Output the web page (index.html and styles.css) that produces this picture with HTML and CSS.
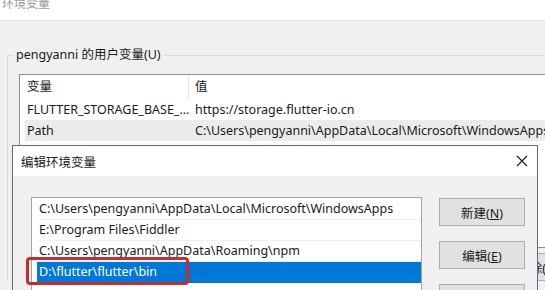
FILE: index.html
```html
<!DOCTYPE html>
<html lang="zh-CN">
<head>
    <meta charset="UTF-8">
    <title>环境变量</title>
    <link rel="stylesheet" href="styles.css">
</head>
<body>
    <div class="env-window">
        <div class="env-title">环境变量</div>
        <div class="env-body">
            <div class="group">
                <div class="group-label">pengyanni 的用户变量(U)</div>
                <div class="var-list">
                    <div class="var-row var-head">
                        <span class="col-name">变量</span>
                        <span class="col-value">值</span>
                    </div>
                    <div class="var-row">
                        <span class="col-name">FLUTTER_STORAGE_BASE_...</span>
                        <span class="col-value">https://storage.flutter-io.cn</span>
                    </div>
                    <div class="var-row is-current">
                        <span class="col-name">Path</span>
                        <span class="col-value">C:\Users\pengyanni\AppData\Local\Microsoft\WindowsApps</span>
                    </div>
                </div>
                <div class="group-buttons">
                    <button class="win-btn">新建(<u>W</u>)...</button>
                    <button class="win-btn">编辑(<u>I</u>)...</button>
                    <button class="win-btn">删除(<u>D</u>)</button>
                </div>
            </div>
        </div>
    </div>

    <div class="edit-dialog">
        <div class="dialog-title">
            <span>编辑环境变量</span>
            <svg class="close-icon" width="12" height="12" viewBox="0 0 12 12">
                <path d="M1 1 L11 11 M11 1 L1 11" stroke="#1a1a1a" stroke-width="1.1" fill="none"/>
            </svg>
        </div>
        <div class="dialog-body">
            <div class="path-list">
                <div class="path-row">C:\Users\pengyanni\AppData\Local\Microsoft\WindowsApps</div>
                <div class="path-row">E:\Program Files\Fiddler</div>
                <div class="path-row">C:\Users\pengyanni\AppData\Roaming\npm</div>
                <div class="path-row is-selected">D:\flutter\flutter\bin</div>
            </div>
            <div class="dialog-buttons">
                <button class="win-btn">新建(<u>N</u>)</button>
                <button class="win-btn">编辑(<u>E</u>)</button>
                <button class="win-btn">浏览(<u>B</u>)...</button>
            </div>
        </div>
    </div>

    <div class="mark-box"></div>
</body>
</html>
```

FILE: styles.css
```css
html, body {
    margin: 0;
    padding: 0;
}
body {
    width: 545px;
    height: 290px;
    overflow: hidden;
    position: relative;
    background: #f0f0f0;
    color: #1a1a1a;
    font-family: "Noto Sans", "Noto Sans CJK SC", sans-serif;
    font-size: 12.5px;
}

/* base window */
.env-title {
    height: 20px;
    background: #fff;
    border-bottom: 1px solid #e2e2e2;
    color: #9a9a9a;
    padding-left: 2px;
    line-height: 8px;
    font-size: 12px;
}
.group {
    margin: 34px 0 0 7px;
    border-top: 1px solid #dadada;
    border-left: 1px solid #dadada;
}
.group-label {
    width: max-content;
    margin: -9px 0 0 6px;
    padding: 0 2px;
    background: #f0f0f0;
    line-height: 16px;
}
.var-list {
    margin: 11px 0 0 11px;
    width: 600px;
    height: 172px;
    background: #fff;
    border: 1px solid #8f8f8f;
}
.var-row {
    display: flex;
    height: 21px;
    line-height: 21px;
    margin-left: 5px;
    white-space: nowrap;
}
.var-head {
    height: 24px;
    line-height: 23px;
}
.var-row .col-name {
    width: 161px;
    padding-left: 2px;
}
.var-head .col-name {
    border-right: 1px solid #e5e5e5;
}
.var-row .col-value {
    padding-left: 7px;
}
.var-head .col-value {
    padding-left: 6px;
}
.var-row.is-current {
    background: #ebebeb;
}
.group-buttons {
    display: flex;
    gap: 10px;
    margin: 5px 0 0 295px;
}

.win-btn {
    flex: none;
    width: 86px;
    height: 28px;
    padding: 0;
    background: #e1e1e1;
    border: 1px solid #adadad;
    font-family: inherit;
    font-size: 12.5px;
    color: #1a1a1a;
}

/* edit dialog, a window over the base one */
.edit-dialog {
    position: absolute;
    left: 12px;
    top: 145px;
    width: 524px;
    height: 160px;
    border: 1px solid #5f6b7a;
    background: #f0f0f0;
}
.dialog-title {
    display: flex;
    align-items: center;
    justify-content: space-between;
    height: 30px;
    padding: 0 9px 0 8px;
    background: #fff;
}
.close-icon {
    display: block;
}
.dialog-body {
    display: flex;
    gap: 17px;
    padding: 21px 0 0 18px;
}
.path-list {
    width: 384px;
    height: 120px;
    padding: 1px 0 0 5px;
    background: #fff;
    border: 1px solid #a3a3a3;
}
.path-row {
    height: 21px;
    line-height: 20px;
    padding-left: 2px;
    border-bottom: 1px solid #eeeeee;
    box-sizing: border-box;
    white-space: nowrap;
}
.path-row.is-selected {
    background: #0078d7;
    color: #fff;
    border-bottom-color: #0078d7;
}
.dialog-buttons {
    display: flex;
    flex-direction: column;
    gap: 15px;
    padding-top: 1px;
}

/* red annotation drawn over the screenshot */
.mark-box {
    position: absolute;
    left: 26px;
    top: 257px;
    width: 157px;
    height: 22px;
    border: 3px solid #cc2b2b;
    border-radius: 4px;
}
```
